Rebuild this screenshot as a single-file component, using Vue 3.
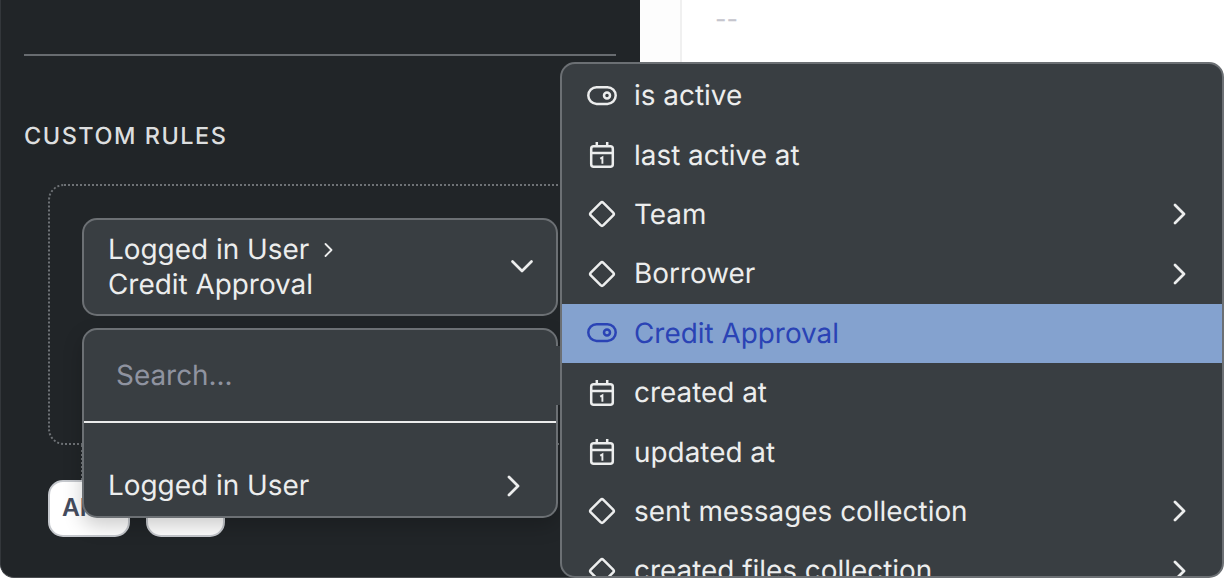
<script setup>
const rows = [
  { label: 'is active', icon: 'toggle' },
  { label: 'last active at', icon: 'calendar' },
  { label: 'Team', icon: 'diamond', more: true },
  { label: 'Borrower', icon: 'diamond', more: true },
  { label: 'Credit Approval', icon: 'toggle', active: true },
  { label: 'created at', icon: 'calendar' },
  { label: 'updated at', icon: 'calendar' },
  { label: 'sent messages collection', icon: 'diamond', more: true },
  { label: 'created files collection', icon: 'diamond', more: true },
]
</script>

<template>
  <div class="page">
    <aside class="panel">
      <div class="rule"></div>
      <h2 class="title">CUSTOM RULES</h2>
      <div class="group">
        <div class="select">
          <div class="select-text">
            <div class="crumb">
              Logged in User
              <svg class="crumb-arrow" width="12" height="18" viewBox="0 0 12 18"><path d="M2.5 3l6 6-6 6" /></svg>
            </div>
            <div>Credit Approval</div>
          </div>
          <svg class="caret" width="24" height="16" viewBox="0 0 24 16"><path d="M2.5 2.5l9.5 9.5 9.5-9.5" /></svg>
        </div>
      </div>
      <div class="tail"></div>
      <div class="buttons">
        <button class="btn btn-and">AND</button>
        <button class="btn btn-or"></button>
      </div>

      <div class="dropdown">
        <div class="edge-patch"></div>
        <div class="search">Search...</div>
        <div class="option">
          <span>Logged in User</span>
          <svg class="chev" width="16" height="22" viewBox="0 0 16 22"><path d="M3 2l9 9-9 9" /></svg>
        </div>
      </div>
    </aside>

    <main class="content">
      <div class="value">--</div>
    </main>

    <div class="menu">
      <div v-for="row in rows" :key="row.label" class="row" :class="{ active: row.active }">
        <svg class="icon" width="30" height="30" viewBox="0 0 30 30">
          <template v-if="row.icon === 'toggle'">
            <rect x="1.3" y="6.3" width="27.4" height="16.6" rx="8.3" />
            <circle cx="20" cy="14.6" r="3" />
          </template>
          <template v-else-if="row.icon === 'calendar'">
            <rect x="4.2" y="6.2" width="21.6" height="20.6" rx="2.5" />
            <path d="M4.2 13h21.6M9.8 2v5M20.2 2v5" />
            <path class="one" d="M13.2 18.6l2.2-1.2v6.4" />
          </template>
          <path v-else d="M13.6 3.8a2 2 0 0 1 2.8 0L26.2 13.6a2 2 0 0 1 0 2.8L16.4 26.2a2 2 0 0 1-2.8 0L3.8 16.4a2 2 0 0 1 0-2.8z" />
        </svg>
        <span class="label">{{ row.label }}</span>
        <svg v-if="row.more" class="chev more" width="16" height="22" viewBox="0 0 16 22"><path d="M3 2l9 9-9 9" /></svg>
      </div>
    </div>
  </div>
</template>

<style>
html, body { margin: 0; overflow: hidden; background: #8a8a8a; }
</style>

<style scoped>
.page {
  position: relative;
  display: flex;
  width: 1228px;
  height: 578px;
  overflow: hidden;
  background: #fff;
  font-family: Inter, "Liberation Sans", sans-serif;
  text-rendering: geometricPrecision;
}
.panel {
  position: relative;
  flex: 0 0 640px;
  min-width: 0;
  box-sizing: border-box;
  height: 578px;
  padding: 54px 24px 0 23px;
  background: #212528;
  border-left: 1px solid #33373b;
  border-bottom: 1px solid #4a4d50;
  border-bottom-left-radius: 14px;
}
.rule { height: 2px; background: #686c70; }
.title {
  margin: 66px 0 0;
  font-size: 23.5px;
  line-height: 28px;
  font-weight: 500;
  letter-spacing: 1.5px;
  color: #dcdedf;
}
.group {
  box-sizing: border-box;
  width: 560px;
  height: 261px;
  margin: 34px 0 0 24px;
  padding: 32px 0 0 32px;
  border: 2px dotted #6e7276;
  border-right: 0;
  border-radius: 16px 0 0 16px;
}
.select {
  display: flex;
  align-items: center;
  justify-content: space-between;
  box-sizing: border-box;
  width: 476px;
  height: 98px;
  padding: 0 22px 0 24px;
  background: #393e42;
  border: 2px solid #6c7074;
  border-radius: 15px;
  color: #eceded;
  font-size: 27.9px;
  line-height: 35px;
}
.crumb { display: flex; align-items: center; gap: 14px; }
.crumb-arrow path, .caret path, .chev path {
  fill: none;
  stroke: #eceded;
  stroke-linecap: round;
  stroke-linejoin: round;
}
.crumb-arrow path { stroke-width: 1.8; }
.caret path { stroke-width: 2.7; }
.chev path { stroke-width: 2.8; }
.tail {
  width: 0;
  height: 35px;
  margin-left: 57px;
  border-left: 2px dotted #6e7276;
}
.buttons {
  display: flex;
  gap: 16px;
  margin: 0 0 0 24px;
}
.btn {
  box-sizing: border-box;
  height: 57px;
  padding: 0 0 3px;
  background: #fff;
  border: 2px solid #c6c9ce;
  border-radius: 15px;
  font-family: inherit;
  font-size: 24.5px;
  font-weight: 600;
  color: #454c5e;
}
.btn-and {
  width: 82px;
  text-align: left;
  padding-left: 12px;
}
.btn-or { width: 79px; }
.dropdown {
  position: absolute;
  left: 81px;
  top: 328px;
  box-sizing: border-box;
  width: 476px;
  height: 190px;
  background: #393e42;
  border: 2px solid #6c7074;
  border-radius: 15px;
  box-shadow: 0 8px 20px rgba(0, 0, 0, 0.2);
  color: #eceded;
  font-size: 27.9px;
}
.edge-patch {
  position: absolute;
  left: 100%;
  top: 16px;
  width: 5px;
  height: 59px;
  background: #393e42;
}
.search {
  box-sizing: border-box;
  height: 93px;
  padding: 28px 32px 0;
  line-height: 35px;
  color: #8f93a0;
  border-bottom: 2px solid #eceded;
}
.option {
  display: flex;
  align-items: center;
  justify-content: space-between;
  padding: 45px 34px 0 24px;
  line-height: 35px;
}
.content { flex: 1; min-width: 0; position: relative; background: #fdfdfd; }
.value {
  box-sizing: border-box;
  width: 548px;
  height: 100%;
  margin-left: 40px;
  padding: 3px 0 0 33px;
  border-left: 2px solid #f0f0f0;
  background: #fff;
  color: #c5c5cd;
  font-size: 25px;
  line-height: 35px;
}
.menu {
  position: absolute;
  left: 560px;
  top: 62px;
  box-sizing: border-box;
  width: 664px;
  height: 516px;
  padding-top: 2px;
  overflow: hidden;
  background: #393e42;
  border: 2px solid #6c7074;
  border-radius: 15px;
}
.row {
  display: flex;
  align-items: center;
  flex: none;
  height: 59.4px;
  padding: 0 34px 0 25px;
  color: #eceded;
  font-size: 27.9px;
}
.row.active { background: #84a2cf; color: #2a43b5; }
.label { margin-left: 17px; flex: 1; padding-bottom: 1px; }
.icon rect, .icon circle, .icon path {
  fill: none;
  stroke: currentColor;
  stroke-width: 2.5;
}
.icon path.one { stroke-width: 1.9; }
.chev.more { margin-left: auto; }
</style>
